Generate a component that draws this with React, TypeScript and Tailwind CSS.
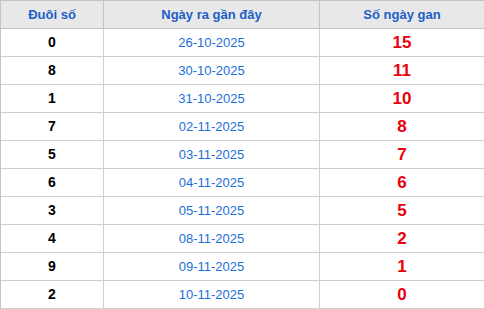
const rows = [
  { tail: "0", date: "26-10-2025", gap: 15 },
  { tail: "8", date: "30-10-2025", gap: 11 },
  { tail: "1", date: "31-10-2025", gap: 10 },
  { tail: "7", date: "02-11-2025", gap: 8 },
  { tail: "5", date: "03-11-2025", gap: 7 },
  { tail: "6", date: "04-11-2025", gap: 6 },
  { tail: "3", date: "05-11-2025", gap: 5 },
  { tail: "4", date: "08-11-2025", gap: 2 },
  { tail: "9", date: "09-11-2025", gap: 1 },
  { tail: "2", date: "10-11-2025", gap: 0 },
];

export default function App() {
  return (
    <div className="w-[484px] bg-white font-['Liberation_Sans',Arial,sans-serif]">
      <div className="grid grid-cols-[103px_216px_165px] border-t border-l border-[#c4c4c4]">
        <div className="h-[28px] flex items-center justify-center bg-[#e8e8e8] border-r border-b border-[#c4c4c4] text-[13px] font-bold text-[#1d5ec9]">
          Đuôi số
        </div>
        <div className="h-[28px] flex items-center justify-center bg-[#e8e8e8] border-r border-b border-[#c4c4c4] text-[13px] font-bold text-[#1d5ec9]">
          Ngày ra gần đây
        </div>
        <div className="h-[28px] flex items-center justify-center bg-[#e8e8e8] border-r border-b border-[#c4c4c4] text-[13px] font-bold text-[#1d5ec9]">
          Số ngày gan
        </div>
        {rows.map((r) => (
          <div key={r.tail} className="contents">
            <div className="h-[28px] flex items-center justify-center border-r border-b border-[#cfcfcf] text-[14px] font-bold text-black">
              {r.tail}
            </div>
            <div className="h-[28px] flex items-center justify-center border-r border-b border-[#cfcfcf] text-[13px] text-[#1a6fd9]">
              {r.date}
            </div>
            <div className="h-[28px] flex items-center justify-center border-r border-b border-[#cfcfcf] text-[17px] font-bold text-[#e8000b]">
              {r.gap}
            </div>
          </div>
        ))}
      </div>
    </div>
  );
}
